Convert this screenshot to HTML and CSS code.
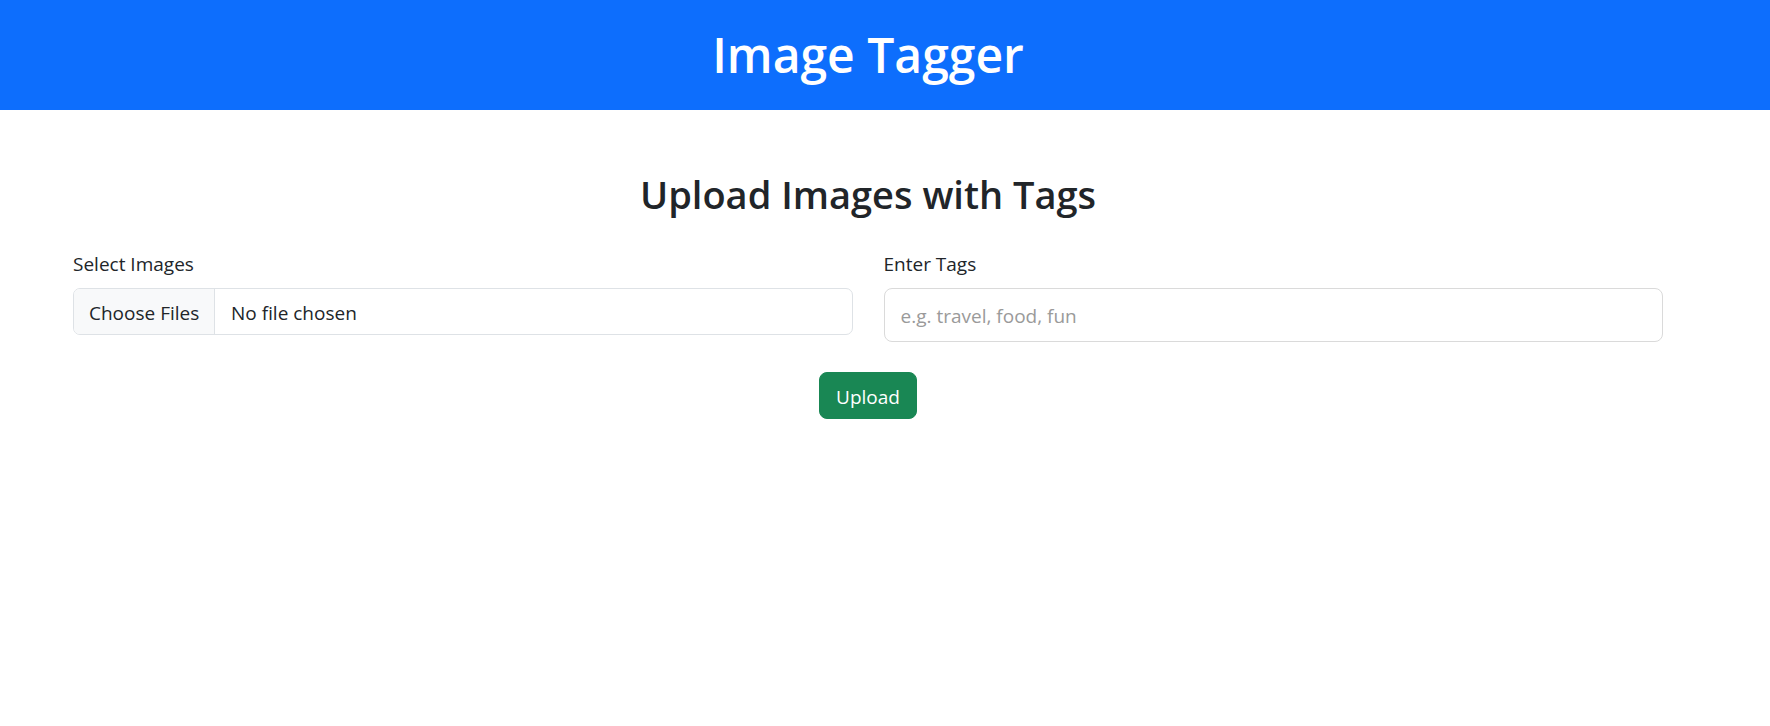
FILE: index.html
```html
<!DOCTYPE html>
<html lang="en">
<head>
<meta charset="utf-8">
<title>Image Tagger</title>
<link rel="stylesheet" href="styles.css">
</head>
<body>
<header class="topbar">
  <h1 class="brand">Image Tagger</h1>
</header>
<main class="page">
  <h2 class="page-title">Upload Images with Tags</h2>
  <form class="upload-form">
    <div class="fields">
      <div class="field">
        <label class="field-label" for="files">Select Images</label>
        <div class="file-control">
          <span class="file-button">Choose Files</span>
          <span class="file-name">No file chosen</span>
        </div>
      </div>
      <div class="field">
        <label class="field-label" for="tags">Enter Tags</label>
        <input class="text-control" id="tags" type="text" placeholder="e.g. travel, food, fun">
      </div>
    </div>
    <div class="actions">
      <button class="btn-upload" type="button">Upload</button>
    </div>
  </form>
</main>
</body>
</html>
```
FILE: styles.css
```css
* { box-sizing: border-box; }
body {
  margin: 0;
  font-family: "Open Sans", "Noto Sans", sans-serif;
  color: #212529;
  background: #fff;
}
.topbar {
  background: #0d6efd;
  height: 110px;
  display: flex;
  align-items: center;
  justify-content: center;
  padding-right: 34px;
}
.brand {
  margin: 0;
  color: #fff;
  font-size: 48px;
  font-weight: 600;
  line-height: 1.2;
}
.page {
  width: 1736px;
  padding: 60px 73px 0;
}
.page-title {
  margin: 0;
  text-align: center;
  font-size: 38px;
  font-weight: 600;
  line-height: 48px;
}
.upload-form { margin-top: 34px; }
.fields {
  display: grid;
  grid-template-columns: 1fr 1fr;
  gap: 31px;
  align-items: start;
}
.field-label {
  display: block;
  font-size: 19px;
  line-height: 24px;
  margin-bottom: 12px;
}
.file-control {
  display: flex;
  height: 47px;
  border: 1px solid #dee2e6;
  border-radius: 7px;
  overflow: hidden;
  font-size: 19px;
}
.file-button {
  display: flex;
  align-items: center;
  width: 141px;
  padding: 3px 0 0 15px;
  background: #f8f9fa;
  border-right: 1px solid #dee2e6;
}
.file-name {
  display: flex;
  align-items: center;
  padding: 3px 0 0 16px;
}
.text-control {
  display: block;
  width: 100%;
  height: 54px;
  padding: 2px 16px 0;
  border: 1px solid #dadada;
  border-radius: 8px;
  font-family: inherit;
  font-size: 19px;
  color: #212529;
  outline: none;
}
.text-control::placeholder { color: #9a9a9a; }
.actions {
  display: flex;
  justify-content: center;
  margin-top: 30px;
}
.btn-upload {
  height: 47px;
  padding: 2px 16px 0;
  border: 1px solid #198754;
  border-radius: 8px;
  background: #198754;
  color: #fff;
  font-family: inherit;
  font-size: 19px;
}
```
